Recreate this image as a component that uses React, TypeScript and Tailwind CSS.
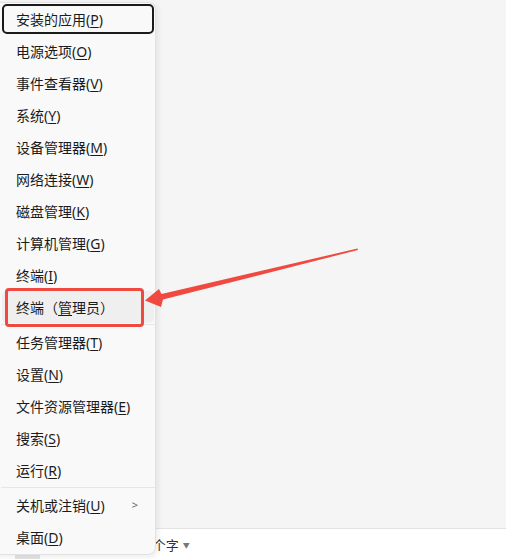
import React from "react";

type Item = { label: string; key?: string; sub?: boolean };

const groups: Item[][] = [
  [
    { label: "安装的应用", key: "P" },
    { label: "电源选项", key: "O" },
    { label: "事件查看器", key: "V" },
    { label: "系统", key: "Y" },
    { label: "设备管理器", key: "M" },
    { label: "网络连接", key: "W" },
    { label: "磁盘管理", key: "K" },
    { label: "计算机管理", key: "G" },
    { label: "终端", key: "I" },
    { label: "admin" },
  ],
  [
    { label: "任务管理器", key: "T" },
    { label: "设置", key: "N" },
    { label: "文件资源管理器", key: "E" },
    { label: "搜索", key: "S" },
    { label: "运行", key: "R" },
  ],
  [
    { label: "关机或注销", key: "U", sub: true },
    { label: "桌面", key: "D" },
  ],
];

function Label({ item }: { item: Item }) {
  if (item.label === "admin") {
    return (
      <span>
        终端（<u className="underline-offset-2">管</u>理员）
      </span>
    );
  }
  return (
    <span>
      {item.label}(<u className="underline-offset-2 decoration-1">{item.key}</u>)
    </span>
  );
}

export default function App() {
  return (
    <div className="relative w-[506px] h-[559px] overflow-hidden bg-[#f5f5f5] font-['Noto_Sans','Noto_Sans_CJK_SC',sans-serif] text-[14px] text-[#1b1b1b]">
      <div className="flex flex-col h-full">
        <div className="h-[528px] bg-[#f5f5f5]" />
        <div className="flex-1 flex items-center pt-[4px] bg-white border-t border-[#e3e3e3]">
          <div className="self-end ml-[15px] w-[25px] h-[6px] bg-[#e4e4e4]" />
          <span className="ml-[102px] text-[13px] text-[#333]">0 个字</span>
          <span className="ml-[4px] text-[7px] text-[#777]">▼</span>
        </div>
      </div>

      {/* context menu */}
      <div className="absolute left-[-8px] top-[2px] w-[164px] pl-[8px] pb-[1px] bg-[#f9f9f9] border border-[#e2e2e2] rounded-lg shadow-[2px_2px_6px_rgba(0,0,0,0.08)]">
        {groups.map((g, gi) => (
          <div key={gi}>
            {gi > 0 && <div className="my-[1px] h-px bg-[#e6e6e6]" />}
            {g.map((item, i) => {
              const focus = gi === 0 && i === 0;
              const hover = item.label === "admin";
              return (
                <div
                  key={i}
                  className={
                    "mx-[1px] flex items-center justify-between pr-[16px] rounded-[5px] " +
                    (focus ? "my-[1px] h-[30px] border-2 border-[#1a1a1a] pl-[12px] " : "h-[32px] pl-[14px] ") +
                    (hover ? "bg-[#efefef] " : "")
                  }
                >
                  <Label item={item} />
                  {item.sub && <span className="text-[11px] text-[#666]">&gt;</span>}
                </div>
              );
            })}
          </div>
        ))}
      </div>

      {/* annotation: red box + arrow */}
      <div className="absolute left-[5px] top-[288px] w-[139px] h-[39px] border-[3px] border-[#ef4940] rounded-[4px]" />
      <svg className="absolute left-0 top-0" width="506" height="559" viewBox="0 0 506 559">
        <polygon
          points="145,300.5 159,289 161.5,294 357.5,248.5 358,250 163,299.5 161,307"
          fill="#ef4940"
        />
      </svg>
    </div>
  );
}
